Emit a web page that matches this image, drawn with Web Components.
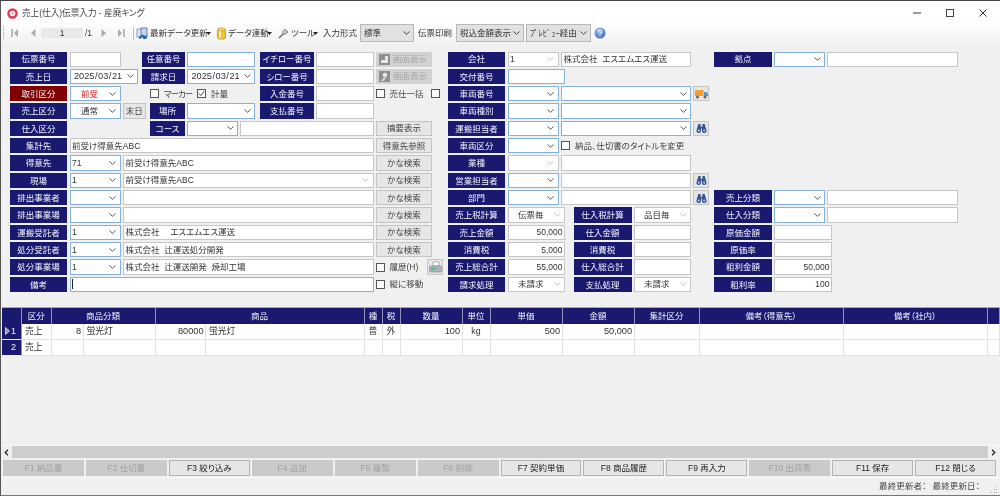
<!DOCTYPE html>
<html lang="ja"><head><meta charset="utf-8"><title>売上(仕入)伝票入力</title>
<style>
html,body{margin:0;padding:0;height:496px;overflow:hidden;background:#f0f0f0}
body{font:8.5px/1 "Liberation Sans","Noto Sans CJK JP",sans-serif;color:#333;font-feature-settings:"palt"}
</style></head><body>
<sk-app>
  <sk-titlebar>売上(仕入)伝票入力 - 産廃キング</sk-titlebar>
  <sk-toolbar></sk-toolbar>
  <sk-form></sk-form>
  <sk-table></sk-table>
  <sk-hscroll></sk-hscroll>
  <sk-fkeys></sk-fkeys>
  <sk-status></sk-status>
</sk-app>
<script>
const ICONS={
 chev:c=>`<svg width="7" height="4" viewBox="0 0 7 4"><path d="M.5.5 3.5 3.3 6.5.5" fill="none" stroke="${c}" stroke-width="1"/></svg>`,
 tri:`<svg width="5" height="3" viewBox="0 0 5 3"><path d="M0 0h5L2.5 3z" fill="#222"/></svg>`,
 first:`<svg width="8" height="10" viewBox="0 0 8 10"><path d="M1 1v8" stroke="#aaa" stroke-width="1.6"/><path d="M7 1v8L3 5z" fill="#aaa"/></svg>`,
 prev:`<svg width="6" height="10" viewBox="0 0 6 10"><path d="M5.5 1v8L1 5z" fill="#aaa"/></svg>`,
 next:`<svg width="6" height="10" viewBox="0 0 6 10"><path d="M.5 1v8L5 5z" fill="#aaa"/></svg>`,
 last:`<svg width="8" height="10" viewBox="0 0 8 10"><path d="M7 1v8" stroke="#aaa" stroke-width="1.6"/><path d="M1 1v8l4-4z" fill="#aaa"/></svg>`,
 refresh:`<svg width="12" height="13" viewBox="0 0 12 13"><rect x="1" y="2" width="6" height="8" fill="#dfe8f5" stroke="#6a87b5" stroke-width=".8"/><rect x="5" y="1" width="6" height="9" fill="#c5d6ee" stroke="#3f68a8" stroke-width=".8"/><path d="M3 12a3.5 3.5 0 0 1 6-3l1.500-1v4H6.500l1.300-1.200a2 2 0 0 0-3.300.9z" fill="#2f63b5"/></svg>`,
 cyl:`<svg width="9" height="13" viewBox="0 0 9 13"><rect x=".5" y="1.500" width="8" height="10.500" rx="2" fill="#f3c43b" stroke="#a8842a" stroke-width=".7"/><rect x="2" y="3" width="2" height="8" fill="#fbe9a5"/><ellipse cx="4.500" cy="2.300" rx="3.800" ry="1.500" fill="#f8dc7a" stroke="#a8842a" stroke-width=".5"/></svg>`,
 tool:`<svg width="11" height="11" viewBox="0 0 11 11"><path d="M1 10 5.500 5.500" stroke="#666" stroke-width="1.400"/><path d="M4.500 4.200 7 1.200l3 2.800-3 2.500z" fill="#c9c9c9" stroke="#666" stroke-width=".8"/></svg>`,
 help:`<svg width="12" height="12" viewBox="0 0 12 12"><defs><radialGradient id="h" cx=".4" cy=".3" r=".8"><stop offset="0" stop-color="#a9c8f2"/><stop offset="1" stop-color="#2f5fb8"/></radialGradient></defs><circle cx="6" cy="6" r="5.500" fill="url(#h)"/><path d="M4.300 4.600a1.800 1.700 0 1 1 2.600 1.600c-.6.300-.9.600-.9 1.200" fill="none" stroke="#fff" stroke-width="1.100"/><circle cx="6" cy="9.100" r=".7" fill="#fff"/></svg>`,
 truck:`<svg width="13" height="10" viewBox="0 0 13 10"><rect x="0" y="1" width="8.500" height="6" fill="#f0a030"/><path d="M9 3h2.500L13 5v2H9z" fill="#4f9bd0"/><circle cx="2.500" cy="8" r="1.500" fill="#666"/><circle cx="10" cy="8" r="1.500" fill="#666"/></svg>`,
 binoc:`<svg width="11" height="10" viewBox="0 0 12 11"><path d="M2.500 1h2.500v3h2V1h2.500l1.800 6.500a2.500 2.500 0 1 1-4.800 1V6H5.500v2.500a2.500 2.500 0 1 1-4.800-1z" fill="#34568f"/><circle cx="3" cy="8.300" r="1.200" fill="#b4c6e4"/><circle cx="9" cy="8.300" r="1.200" fill="#b4c6e4"/></svg>`,
 printer:`<svg width="13" height="12" viewBox="0 0 13 12"><path d="M4 1h6v4H4z" fill="#fff" stroke="#8b98a8" stroke-width=".7"/><rect x=".5" y="5" width="12" height="6" rx="1" fill="#aab4c2" stroke="#78838f" stroke-width=".6"/><rect x="2" y="7" width="5" height="1.600" fill="#3cc45a"/></svg>`,
 img1:`<svg width="11" height="11" viewBox="0 0 11 11"><rect width="11" height="11" fill="#8e8e8e"/><path d="M6 2h3v7H2V6h4z" fill="#e6e6e6"/></svg>`,
 img2:`<svg width="11" height="11" viewBox="0 0 11 11"><rect width="11" height="11" fill="#8e8e8e"/><circle cx="6" cy="4" r="2.300" fill="#e6e6e6"/><path d="M2 10l3-4 2 1-2 3z" fill="#d0d0d0"/></svg>`
};
function def(name,css,html,init){
  customElements.define(name,class extends HTMLElement{
    constructor(){super();const r=this.attachShadow({mode:'open'});
      r.innerHTML=`<style>${css}</style>`+(typeof html==='function'?html(this):html);}
    connectedCallback(){ if(init&&!this._d){this._d=1;init.call(this);} }
  });
}
def('sk-app',`:host{display:flex;flex-direction:column;box-sizing:border-box;height:496px;border-top:1px solid #444;border-left:1px solid #555;border-bottom:1px solid #777;background:linear-gradient(#fff 0,#fff 20px,#f0f0f0 46px);filter:blur(.3px)}`,`<slot></slot>`);
def('sk-titlebar',`:host{display:flex;align-items:center;height:21px;padding:3px 0 0 6px;box-sizing:border-box;flex:none;color:#444}
 .t{margin-left:4px;font-size:8.600px}.sp{flex:1}
 .w{display:flex;width:33px;justify-content:center;align-items:center}`,
 `<svg width="11" height="11" viewBox="0 0 11 11"><circle cx="5.500" cy="5.500" r="5.200" fill="#e8344f"/><circle cx="5.500" cy="5.500" r="2.800" fill="#fff"/><circle cx="5.500" cy="5.500" r="1.200" fill="#e8a0a8"/></svg>
 <span class="t"><slot></slot></span><span class="sp"></span>
 <span class="w"><svg width="8" height="8"><path d="M0 4h8" stroke="#555" stroke-width="1.200"/></svg></span>
 <span class="w"><svg width="8" height="8"><rect x=".5" y=".5" width="7" height="7" fill="none" stroke="#444"/></svg></span>
 <span class="w" style="margin-right:1px"><svg width="8" height="8"><path d="M.5.5l7 7M7.500.5l-7 7" stroke="#333" stroke-width="1"/></svg></span>`);
def('sk-select',`:host{display:flex;align-items:center;box-sizing:border-box;height:18px;background:#e1e1e1;border:1px solid #b8b8b8;padding:0 3px 0 3px;justify-content:space-between;color:#333;flex:none;white-space:nowrap;overflow:hidden}`,
 `<span><slot></slot></span>${ICONS.chev('#444')}`);
def('sk-toolbar',`:host{display:flex;align-items:center;height:18px;padding-left:2px;margin-top:2px;flex:none;white-space:nowrap}
 .grip{width:1px;height:14px;background-image:linear-gradient(#999 50%,transparent 50%);background-size:1px 2px;margin-right:7px}
 .num{width:42px;height:10px;background:#e9e9e9;text-align:center;line-height:10px;margin:0 2px 0 5px}
 .sep{width:1px;height:13px;background:#bbb;margin:0 2px 0 8px}
 .t{margin-left:2px}.m{display:inline-flex;margin:0 6px 0 3px}
 svg{flex:none}`,
 `<span class="grip"></span>${ICONS.first}<span style="width:11px"></span>${ICONS.prev}<span class="num">1</span><span style="width:8px">/1</span><span style="width:8px"></span>${ICONS.next}<span style="width:10px"></span>${ICONS.last}<span class="sep"></span>${ICONS.refresh}<span class="t" style="width:53px">最新データ更新</span><span class="m">${ICONS.tri}</span>${ICONS.cyl}<span class="t" style="width:36px">データ連動</span><span class="m">${ICONS.tri}</span>${ICONS.tool}<span class="t" style="width:19px">ツール</span><span class="m" style="margin-right:5px">${ICONS.tri}</span><span style="width:36px">入力形式</span>
 <sk-select style="width:54px;margin-left:1px">標準</sk-select><span style="margin:0 4px 0 4px;width:34px">伝票印刷</span><sk-select style="width:68px">税込金額表示</sk-select><sk-select style="width:65px;margin-left:2px">ﾌﾟﾚﾋﾞｭｰ経由</sk-select><span style="margin-left:3px;display:inline-flex">${ICONS.help}</span>`);
def('sk-label',`:host{display:flex;align-items:center;justify-content:center;background:#191970;color:#f4f4fa;white-space:nowrap;overflow:hidden;padding-top:1px;box-sizing:border-box}
 :host([tone=red]){background:#800000}`,`<slot></slot>`);
def('sk-field',`:host{display:flex;align-items:center;box-sizing:border-box;background:#fff;border:1px solid #c6c6c6;padding:0 1.500px;white-space:pre;overflow:hidden;min-width:0;color:#333}
 :host([blue]){border-color:#84b2da}
 :host([date]){font-size:9.200px;word-spacing:-2px;padding-left:3.500px}
 .v{flex:1;min-width:0}:host([align=right]) .v{text-align:right}:host([align=center]) .v{text-align:center}
 :host([tone=red]) .v{color:#f01818}
 .c{display:none;flex:none;margin:0 2px 0 2px}
 :host([dd]) .c{display:inline-flex}:host([dd=off]) .a{display:none}:host([dd=on]) .b{display:none}
 .a,.b{display:inline-flex}
 .caret{display:none;width:1px;height:10px;background:#222}:host([caret]) .caret{display:block}`,
 `<span class="caret"></span><span class="v"><slot></slot></span><span class="c"><span class="a">${ICONS.chev('#555')}</span><span class="b">${ICONS.chev('#c4c4c4')}</span></span>`);
def('sk-btn',`:host{display:flex;align-items:center;justify-content:center;gap:3px;box-sizing:border-box;background:#e6e6e6;border:1px solid #c4c4c4;color:#444;white-space:nowrap;overflow:hidden}
 :host([off]){background:#d2d2d2;border-color:#d2d2d2;color:#a6a6a6;justify-content:flex-start;padding-left:2px}`,`<slot name="i"></slot><slot></slot>`);
def('sk-check',`:host{display:flex;align-items:center;gap:5px;white-space:nowrap;color:#444}
 .b{width:9px;height:9px;box-sizing:border-box;border:1px solid #555;background:#fff;flex:none;display:flex}
 svg{display:none}:host([on]) svg{display:block}`,
 `<span class="b"><svg width="7" height="7" viewBox="0 0 7 7"><path d="M.8 3.500 2.800 5.500 6.300 1" fill="none" stroke="#444" stroke-width="1"/></svg></span><slot></slot>`);

const L1=[10,67],F1=[69.5,120.5],F1w=[69.5,138],FULL=[69.5,373.5],N=[123,373.5],B=[376,432],
 L2=[448,505],F2=[507.5,558.5],F2b=[507.5,565],F3=[561,691],I=[693,709],
 L3=[714,772],F4=[774,825],F4b=[774,832],F5=[827,958],
 LA=[142,185],LB=[150,185],G=[187,255],LC=[260,314],H=[316,373.5],LM=[573.5,631.5],FM=[633.5,691];
const lab=(t,x,o={})=>({k:'label',t,x,...o}), inp=(t,x,o={})=>({k:'field',t,x,...o}),
 dd=(t,x,o={})=>inp(t,x,{dd:'on',blue:1,...o}), off=(t,x,o={})=>inp(t,x,{dd:'off',...o}),
 bt=(t,x,o={})=>({k:'btn',t,x,...o}), ck=(t,x,o={})=>({k:'check',t,x,...o}),
 ic=(i,x)=>({k:'btn',t:'',x,icon:i});
const ROWS=[
 [lab('伝票番号',L1),inp('',F1),lab('任意番号',LA),inp('',G,{blue:1}),lab('イチロー番号',LC),inp('',H),bt('画面表示',B,{off:1,icon:'img1'}),lab('会社',L2),off('1',F2),inp('株式会社  エスエムエス運送',F3),lab('拠点',L3),dd('',F4),inp('',F5)],
 [lab('売上日',L1),dd('2025 / 03 / 21',F1w,{date:1}),lab('請求日',LA),dd('2025 / 03 / 21',G,{date:1}),lab('シロー番号',LC),inp('',H),bt('画面表示',B,{off:1,icon:'img2'}),lab('交付番号',L2),inp('',F2b,{blue:1})],
 [lab('取引区分',L1,{tone:'red'}),dd('前受',F1,{align:'center',tone:'red'}),ck('マーカー',[150,190],{tight:1}),ck('計量',[197,240],{on:1}),lab('入金番号',LC),inp('',H),ck('売仕一括',[375.5,428]),ck('',[431,441]),lab('車両番号',L2),dd('',F2),dd('',F3),ic('truck',I)],
 [lab('売上区分',L1),dd('通常',F1,{align:'center'}),bt('末日',[123,145.5]),lab('場所',LB),dd('',G),lab('支払番号',LC),inp('',H),lab('車両種別',L2),dd('',F2),dd('',F3)],
 [lab('仕入区分',L1),lab('コース',LB),dd('',[187,238]),inp('',[240,373.5]),bt('摘要表示',B),lab('運搬担当者',L2),dd('',F2),dd('',F3),ic('binoc',I)],
 [lab('集計先',L1),inp('前受け得意先ABC',FULL),bt('得意先参照',B),lab('車両区分',L2),dd('',F2),ck('納品、仕切書のタイトルを変更',F3)],
 [lab('得意先',L1),dd('71',F1),inp('前受け得意先ABC',N),bt('かな検索',B),lab('業種',L2),off('',F2),inp('',F3)],
 [lab('現場',L1),dd('1',F1),off('前受け得意先ABC',N),bt('かな検索',B),lab('営業担当者',L2),dd('',F2),inp('',F3),ic('binoc',I)],
 [lab('排出事業者',L1),dd('',F1),inp('',N),bt('かな検索',B),lab('部門',L2),dd('',F2),inp('',F3),ic('binoc',I),lab('売上分類',L3),dd('',F4),inp('',F5)],
 [lab('排出事業場',L1),dd('',F1),inp('',N),bt('かな検索',B),lab('売上税計算',L2),off('伝票毎',F2b,{align:'center'}),lab('仕入税計算',LM),off('品目毎',FM,{align:'center'}),lab('仕入分類',L3),dd('',F4),inp('',F5)],
 [lab('運搬受託者',L1),dd('1',F1),inp('株式会社　 エスエムエス運送',N),bt('かな検索',B),lab('売上金額',L2),inp('50,000',F2b,{align:'right'}),lab('仕入金額',LM),inp('',FM),lab('原価金額',L3),inp('',F4b)],
 [lab('処分受託者',L1),dd('1',F1),inp('株式会社  辻運送処分開発',N),bt('かな検索',B),lab('消費税',L2),inp('5,000',F2b,{align:'right'}),lab('消費税',LM),inp('',FM),lab('原価率',L3),inp('',F4b)],
 [lab('処分事業場',L1),dd('1',F1),inp('株式会社  辻運送開発  焼却工場',N),ck('履歴(H)',[375.5,420]),ic('printer',[427,443]),lab('売上総合計',L2),inp('55,000',F2b,{align:'right'}),lab('仕入総合計',LM),inp('',FM),lab('粗利金額',L3),inp('50,000',F4b,{align:'right'})],
 [lab('備考',L1),inp('',FULL,{blue:1,caret:1}),ck('縦に移動',[375.5,430]),lab('請求処理',L2),off('未請求',F2b,{align:'center'}),lab('支払処理',LM),off('未請求',FM,{align:'center'}),lab('粗利率',L3),inp('100',F4b,{align:'right'})]
];
def('sk-form',`:host{display:grid;flex:none;margin-top:9.500px;grid-auto-rows:15.330px;row-gap:2px}`,`<slot></slot>`,function(){
  const xs=[...new Set(ROWS.flat().flatMap(c=>c.x))].sort((a,b)=>a-b);
  this.style.marginLeft=(xs[0]-1)+'px';
  this.style.gridTemplateColumns=xs.slice(1).map((v,i)=>(v-xs[i])+'px').join(' ');
  ROWS.forEach((row,r)=>row.forEach(c=>{
    const e=document.createElement('sk-'+c.k);
    e.style.gridRow=String(r+1);
    e.style.gridColumn=(xs.indexOf(c.x[0])+1)+'/'+(xs.indexOf(c.x[1])+1);
    if(c.t) e.append(c.t);
    for(const a of ['dd','align','tone']) if(c[a]) e.setAttribute(a,c[a]);
    for(const a of ['blue','caret','on','off','date']) if(c[a]) e.setAttribute(a,'');
    if(c.tight) e.style.letterSpacing='-1px';
    if(c.icon){const s=document.createElement('span');s.slot='i';s.style.display='inline-flex';s.innerHTML=ICONS[c.icon];e.prepend(s);}
    this.append(e);
  }));
});
def('sk-table',`:host{display:grid;flex:1;margin:14.500px 0 0 1px;align-content:start;
   grid-template-columns:20px 29.500px 32px 72px 50.500px 158.500px 18px 18px 62px 28px 72px 72px 65px 144px 144px 12px;
   grid-template-rows:16px 16.300px 16.300px;border-top:1px solid #a8a8a8}
 .h{background:#191970;color:#f2f2f8;display:flex;align-items:center;justify-content:center;border-right:1px solid #8f8fb8;box-sizing:border-box;white-space:nowrap;padding-top:1px}
 .r{background:#191970;color:#f2f2f8;display:flex;align-items:center;justify-content:flex-end;padding-right:5px;box-sizing:border-box;border-bottom:1.500px solid #f0f0f0;position:relative;border-right:1px solid #8f8fb8;font-size:9px}
 .r svg{position:absolute;left:3px;top:3.500px}
 .c{background:#fff;border-right:1px solid #e2e2e2;border-bottom:1.500px solid #e2e2e2;display:flex;align-items:center;padding:0 3px;box-sizing:border-box;white-space:nowrap;overflow:hidden;color:#333;font-size:8.800px}
 .rt{justify-content:flex-end;font-size:9.200px;padding-right:1.500px}.ct{justify-content:center}`,
 ()=>{
  const h=[['',1],['区分',1],['商品分類',2],['商品',2],['種',1],['税',1],['数量',1],['単位',1],['単価',1],['金額',1],['集計区分',1],['備考（得意先）',1],['備考（社内）',1],['',1]]
   .map(([t,s])=>`<div class="h" style="grid-column:span ${s}">${t}</div>`).join('');
  const row=(n,m,v)=>`<div class="r">${m?'<svg width="5" height="8" viewBox="0 0 5 8"><path d="M.5.500v7L4.500 4z" fill="#99a" stroke="#e8e8f0" stroke-width=".8"/></svg>':''}${n}</div>`+
   v.map(([t,cl])=>`<div class="c ${cl||''}">${t}</div>`).join('');
  return h+row(1,1,[['売上'],['8','rt'],['蛍光灯'],['80000','rt'],['蛍光灯'],['普','ct'],['外','ct'],['100','rt'],['kg','ct'],['500','rt'],['50,000','rt'],[''],[''],[''],['']])
   +row(2,0,[['売上'],[''],[''],[''],[''],[''],[''],[''],[''],[''],[''],[''],[''],[''],['']]);
 });
def('sk-hscroll',`:host{display:flex;align-items:center;height:13px;margin-bottom:1px;flex:none;background:#f0f0f0;border-top:1px solid #fafafa}
 .t{flex:1;height:12px;background:#cdcdcd;margin:0 3px 0 3px}
 svg{margin-left:3px;flex:none}`,
 `<svg width="5" height="7" viewBox="0 0 5 7"><path d="M4 .8 1.200 3.500 4 6.200" fill="none" stroke="#222" stroke-width="1.200"/></svg><span class="t"></span><svg style="margin:0 4px 0 0" width="5" height="7" viewBox="0 0 5 7"><path d="M1 .8 3.800 3.500 1 6.200" fill="none" stroke="#222" stroke-width="1.200"/></svg>`);
def('sk-fkeys',`:host{display:flex;gap:2px;height:16.500px;padding:0 4px 0 2px;flex:none}
 sk-btn{flex:1 1 0;font-size:8.500px;color:#222;background:#e6e6e6;border-color:#b4b4b4;justify-content:center;padding:0}
 sk-btn[off]{background:#cacaca;border-color:#cacaca;color:#a2a2a2}`,
 ()=>[['F1 納品書',1],['F2 仕切書',1],['F3 絞り込み',0],['F4 追加',1],['F5 複製',1],['F6 削除',1],['F7 契約単価',0],['F8 商品履歴',0],['F9 再入力',0],['F10 出荷票',1],['F11 保存',0],['F12 閉じる',0]]
   .map(([t,o])=>`<sk-btn ${o?'off':''}>${t}</sk-btn>`).join(''));
def('sk-status',`:host{display:flex;flex:none;height:17px;align-items:center;justify-content:flex-end;gap:6px;padding-right:2px;margin-top:1px;border-top:1px solid #fafafa;color:#444;letter-spacing:.12px}
 svg{margin-left:4px;align-self:flex-end;margin-bottom:1px}`,
 `<span>最終更新者：</span><span>最終更新日：</span><svg width="8" height="8" viewBox="0 0 8 8"><g fill="#aaa"><rect x="6" y="0" width="1" height="1"/><rect x="4" y="3" width="1" height="1"/><rect x="6" y="3" width="1" height="1"/><rect x="1" y="6" width="1" height="1"/><rect x="4" y="6" width="1" height="1"/><rect x="6" y="6" width="1" height="1"/></g></svg>`);
</script>
</body></html>
